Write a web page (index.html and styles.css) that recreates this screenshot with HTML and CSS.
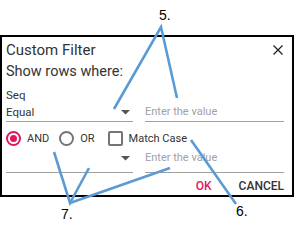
FILE: index.html
```html
<!DOCTYPE html>
<html>
<head>
<meta charset="utf-8">
<link rel="stylesheet" href="styles.css">
</head>
<body>
<div class="page">
  <div class="dialog">
    <div class="header">
      <span class="title">Custom Filter</span>
      <svg class="close" width="10" height="10" viewBox="0 0 10 10"><path d="M0.5 0.5 L9.5 9.5 M9.5 0.5 L0.5 9.5" stroke="#222" stroke-width="1.3" fill="none"/></svg>
    </div>
    <div class="subtitle">Show rows where:</div>
    <div class="field-label">Seq</div>
    <div class="row">
      <div class="select"><span>Equal</span><svg class="caret" width="9" height="5" viewBox="0 0 9 5"><polygon points="0,0 9,0 4.5,4.5" fill="#555"/></svg></div>
      <div class="input">Enter the value</div>
    </div>
    <div class="options">
      <span class="radio checked"><span class="dot"></span></span>
      <span class="opt-label">AND</span>
      <span class="radio second"></span>
      <span class="opt-label">OR</span>
      <span class="checkbox"></span>
      <span class="opt-label">Match Case</span>
    </div>
    <div class="row row2">
      <div class="select"><span></span><svg class="caret" width="9" height="5" viewBox="0 0 9 5"><polygon points="0,0 9,0 4.5,4.5" fill="#555"/></svg></div>
      <div class="input">Enter the value</div>
    </div>
    <div class="footer">
      <span class="btn ok">OK</span>
      <span class="btn cancel">CANCEL</span>
    </div>
  </div>
  <svg class="annot" width="295" height="233" viewBox="0 0 295 233">
    <g stroke="#5b9bd5" stroke-width="2.6" fill="none" stroke-linecap="butt" stroke-linejoin="miter">
      <polyline points="114,109 161,27 177,98"/>
      <line x1="191" y1="140" x2="236" y2="204"/>
      <polyline points="54,152 70,203 89,168"/>
      <line x1="70" y1="203" x2="170" y2="168"/>
    </g>
  </svg>
  <span class="num n5">5.</span>
  <span class="num n6">6.</span>
  <span class="num n7">7.</span>
</div>
</body>
</html>
```

FILE: styles.css
```css
html, body {
  margin: 0;
  padding: 0;
  background: #fff;
}
.page {
  position: relative;
  width: 295px;
  height: 233px;
  padding-top: 35px;
  box-sizing: border-box;
  font-family: Roboto, "Noto Sans", sans-serif;
  color: #333;
}
.dialog {
  width: 294px;
  box-sizing: border-box;
  border: 2px solid #000;
  background: #fff;
  padding: 2px 8px 1px 4px;
}
.header {
  display: flex;
  justify-content: space-between;
  align-items: center;
  height: 22px;
}
.title {
  font-size: 15px;
  line-height: 22px;
}
.close {
  margin-right: 1px;
}
.subtitle {
  font-size: 14.5px;
  line-height: 22px;
}
.field-label {
  font-size: 11.5px;
  line-height: 16px;
  margin-top: 4px;
  margin-bottom: 1px;
}
.row {
  display: flex;
  gap: 12px;
  font-size: 11.5px;
  line-height: 16px;
}
.select {
  width: 127px;
  display: flex;
  justify-content: space-between;
  align-items: center;
  padding-right: 3px;
  padding-bottom: 1px;
  box-sizing: border-box;
  border-bottom: 1px solid #a0a0a0;
}
.caret {
  margin-top: 1px;
}
.input {
  flex: 1;
  font-size: 11px;
  color: #a3a0a6;
  padding-bottom: 1px;
  border-bottom: 1px solid #a0a0a0;
}
.row2 {
  margin-top: 4px;
}
.row2 .select, .row2 .input {
  padding-bottom: 6px;
}
.options {
  display: flex;
  align-items: center;
  height: 15px;
  margin-top: 9px;
  font-size: 11px;
}
.radio {
  width: 15px;
  height: 15px;
  box-sizing: border-box;
  border: 2px solid #757575;
  border-radius: 50%;
  display: flex;
  align-items: center;
  justify-content: center;
}
.radio.checked {
  border-color: #e3165b;
}
.radio.second {
  margin-left: 10px;
}
.dot {
  width: 7px;
  height: 7px;
  border-radius: 50%;
  background: #e3165b;
}
.checkbox {
  width: 15px;
  height: 15px;
  box-sizing: border-box;
  border: 2px solid #757575;
  border-radius: 2px;
  margin-left: 13px;
}
.opt-label {
  margin-left: 6px;
  line-height: 15px;
}
.footer {
  display: flex;
  justify-content: flex-end;
  gap: 27px;
  margin-top: 5px;
  font-size: 12px;
  line-height: 16px;
  font-weight: 500;
}
.ok {
  color: #e3165b;
}
.cancel {
  color: #333;
}
.annot {
  position: absolute;
  left: 0;
  top: 0;
  pointer-events: none;
}
.num {
  position: absolute;
  font-family: "Liberation Sans", Arial, sans-serif;
  font-size: 14px;
  line-height: 14px;
  color: #000;
}
.n5 { left: 159px; top: 8px; }
.n6 { left: 236px; top: 204px; }
.n7 { left: 61px; top: 207px; }
```
